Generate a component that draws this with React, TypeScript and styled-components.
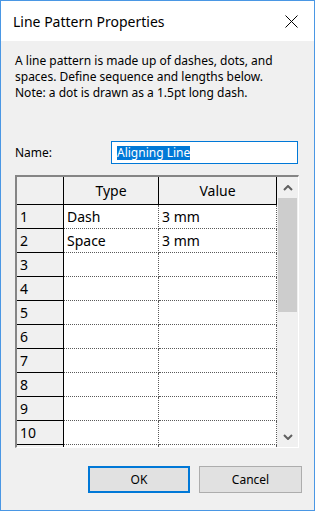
import React from "react";
import styled, { createGlobalStyle } from "styled-components";

const UI = `"Segoe UI", "Noto Sans", "Open Sans", sans-serif`;

const Global = createGlobalStyle`
  html, body { margin: 0; padding: 0; background: #ffffff; }
  * { box-sizing: border-box; }
`;

const Window = styled.div`
  width: 315px;
  height: 511px;
  border: 1px solid #4a97e4;
  background: #f0f0f0;
  display: flex;
  flex-direction: column;
  font-family: ${UI};
  color: #000;
`;

const TitleBar = styled.div`
  height: 40px;
  background: #ffffff;
  display: flex;
  align-items: center;
  justify-content: space-between;
  padding: 0 16px 0 12px;
  flex: none;
`;

const Title = styled.div`
  font-size: 14px;
  color: #000;
  white-space: nowrap;
`;

const CloseBtn = styled.div`
  width: 13px;
  height: 13px;
  display: flex;
  margin-top: 1px;
`;

const Body = styled.div`
  flex: 1;
  display: flex;
  flex-direction: column;
  padding: 12px 12px 0 14px;
`;

const Description = styled.p`
  margin: 0;
  font-size: 12px;
  line-height: 16px;
  white-space: nowrap;
`;

const NameRow = styled.div`
  margin-top: 40px;
  height: 23px;
  display: flex;
  align-items: center;
`;

const Label = styled.div`
  width: 96px;
  font-size: 12px;
`;

const NameInput = styled.div`
  width: 187px;
  height: 23px;
  border: 1px solid #0078d7;
  background: #fff;
  display: flex;
  align-items: center;
  padding-left: 5px;
`;

const Selected = styled.span`
  background: #0078d7;
  color: #fff;
  font-size: 12px;
  line-height: 14px;
  white-space: nowrap;
`;

const Frame = styled.div`
  margin-top: 11px;
  width: 284px;
  height: 273px;
  border-style: solid;
  border-width: 2px 1px 1px 2px;
  border-color: #858585 #ffffff #ffffff #858585;
  display: flex;
`;

const TableArea = styled.div`
  width: 260px;
  height: 100%;
  overflow: hidden;
  background: #fff;
`;

const Row = styled.div<{ $h: number }>`
  display: grid;
  grid-template-columns: 47px 95px 118px;
  height: ${(p) => p.$h}px;
`;

const HeadCell = styled.div`
  background: #f0f0f0;
  border-right: 1px solid #000;
  border-bottom: 1px solid #000;
  display: flex;
  align-items: center;
  justify-content: center;
  font-size: 14px;
`;

const RowHead = styled.div`
  background: #f0f0f0;
  border-right: 1px solid #000;
  border-bottom: 1px solid #000;
  display: flex;
  align-items: center;
  padding-left: 3px;
  font-size: 14px;
`;

const Cell = styled.div`
  background: #fff;
  border-right: 1px dotted #5a5a5a;
  border-bottom: 1px dotted #5a5a5a;
  display: flex;
  align-items: center;
  padding-left: 3px;
  font-size: 14px;
  white-space: nowrap;
`;

const ScrollBar = styled.div`
  width: 21px;
  height: 100%;
  background: #f0f0f0;
  display: flex;
  flex-direction: column;
`;

const ScrollBtn = styled.div`
  height: 21px;
  display: flex;
  align-items: center;
  justify-content: center;
`;

const Thumb = styled.div`
  margin-left: 1px;
  width: 19px;
  height: 114px;
  background: #cdcdcd;
`;

const Track = styled.div`
  flex: 1;
`;

const Buttons = styled.div`
  margin-top: 18px;
  display: flex;
  justify-content: flex-end;
  gap: 9px;
`;

const Button = styled.div<{ $primary?: boolean; $w: number }>`
  width: ${(p) => p.$w}px;
  height: 27px;
  background: #e1e1e1;
  border: ${(p) => (p.$primary ? "2px solid #0078d7" : "1px solid #adadad")};
  display: flex;
  align-items: center;
  justify-content: center;
  font-size: 12px;
`;

const Chevron = ({ up }: { up?: boolean }) => (
  <svg width="10" height="6" viewBox="0 0 10 6">
    <path
      d={up ? "M1 5 L5 1 L9 5" : "M1 1 L5 5 L9 1"}
      fill="none"
      stroke="#606060"
      strokeWidth="2"
    />
  </svg>
);

const rows: { num: string; type: string; value: string }[] = [
  { num: "1", type: "Dash", value: "3 mm" },
  { num: "2", type: "Space", value: "3 mm" },
  ...Array.from({ length: 8 }, (_, i) => ({ num: String(i + 3), type: "", value: "" })),
  { num: "", type: "", value: "" },
];

export default function App() {
  return (
    <>
      <Global />
      <Window>
        <TitleBar>
          <Title>Line Pattern Properties</Title>
          <CloseBtn>
            <svg width="13" height="13" viewBox="0 0 13 13">
              <path d="M0.5 0.5 L12.5 12.5 M12.5 0.5 L0.5 12.5" stroke="#000" strokeWidth="1" />
            </svg>
          </CloseBtn>
        </TitleBar>
        <Body>
          <Description>
            A line pattern is made up of dashes, dots, and
            <br />
            spaces. Define sequence and lengths below.
            <br />
            Note: a dot is drawn as a 1.5pt long dash.
          </Description>
          <NameRow>
            <Label>Name:</Label>
            <NameInput>
              <Selected>Aligning Line</Selected>
            </NameInput>
          </NameRow>
          <Frame>
            <TableArea>
              <Row $h={28}>
                <HeadCell />
                <HeadCell>Type</HeadCell>
                <HeadCell>Value</HeadCell>
              </Row>
              {rows.map((r, i) => (
                <Row $h={24} key={i}>
                  <RowHead>{r.num}</RowHead>
                  <Cell>{r.type}</Cell>
                  <Cell>{r.value}</Cell>
                </Row>
              ))}
            </TableArea>
            <ScrollBar>
              <ScrollBtn>
                <Chevron up />
              </ScrollBtn>
              <Thumb />
              <Track />
              <ScrollBtn>
                <Chevron />
              </ScrollBtn>
            </ScrollBar>
          </Frame>
          <Buttons>
            <Button $primary $w={102}>OK</Button>
            <Button $w={103}>Cancel</Button>
          </Buttons>
        </Body>
      </Window>
    </>
  );
}
